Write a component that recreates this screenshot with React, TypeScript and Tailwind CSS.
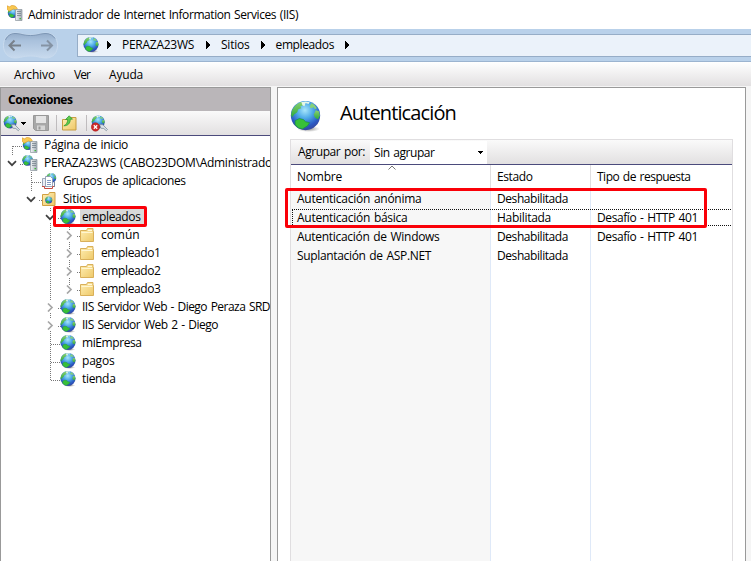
import { useLayoutEffect, useRef, useState, type ReactNode } from 'react';

/* Text whose letter spacing is adjusted so that it fills a given width. */
function Fit({ w, children, className = '' }: { w: number; children: string; className?: string }) {
  const ref = useRef<HTMLSpanElement>(null);
  const [spacing, setSpacing] = useState(0);
  useLayoutEffect(() => {
    const el = ref.current;
    if (!el) return;
    el.style.letterSpacing = '0px';
    const natural = el.getBoundingClientRect().width;
    const next = (w - natural) / children.length;
    el.style.letterSpacing = `${next}px`;
    setSpacing(next);
  }, [w, children]);
  return (
    <span ref={ref} className={`inline-block shrink-0 [word-spacing:1px] whitespace-pre ${className}`} style={{ letterSpacing: spacing }}>
      {children}
    </span>
  );
}

function Defs() {
  return (
    <svg className="absolute size-0" aria-hidden="true">
      <defs>
        <radialGradient id="sea" cx="0.48" cy="0.32" r="0.68">
          <stop offset="0" stopColor="#a8e6fa" />
          <stop offset="0.4" stopColor="#4fabe8" />
          <stop offset="0.78" stopColor="#2a58c4" />
          <stop offset="1" stopColor="#36479c" />
        </radialGradient>
        <linearGradient id="land" x1="0" y1="0" x2="0" y2="1">
          <stop offset="0" stopColor="#8ad070" />
          <stop offset="1" stopColor="#2aa83a" />
        </linearGradient>
        <linearGradient id="folder" x1="0" y1="0" x2="1" y2="1">
          <stop offset="0" stopColor="#ffefb4" />
          <stop offset="1" stopColor="#eec868" />
        </linearGradient>
        <linearGradient id="tower" x1="0" y1="0" x2="1" y2="0">
          <stop offset="0" stopColor="#f2f4f6" />
          <stop offset="1" stopColor="#a2abb3" />
        </linearGradient>
        <linearGradient id="pill" x1="0" y1="0" x2="0" y2="1">
          <stop offset="0" stopColor="#93abc8" />
          <stop offset="0.3" stopColor="#a9c1dc" />
          <stop offset="1" stopColor="#c8daee" />
        </linearGradient>
        <radialGradient id="shade">
          <stop offset="0" stopColor="#555" stopOpacity="0.7" />
          <stop offset="1" stopColor="#777" stopOpacity="0" />
        </radialGradient>
      </defs>
    </svg>
  );
}

function GlobeShape() {
  return (
    <g>
      <circle cx="15" cy="14" r="14.2" fill="url(#sea)" />
      <path d="M2 9C4 5 7 2 11 1l3 1-1 2-3 1 1 2-3 1-1 3-3 2-2 3-1-3z" fill="url(#land)" />
      <path d="M11 1q4-1 8 0l-1 2-3-1-1 3-2-1z" fill="#e6f6e6" />
      <path d="M21 2l3 2 2 3-2 1-1-2-3 1-1-2z" fill="#86d07a" />
      <path d="M25 9l3 1 1 4-2 4-3-2-1-3z" fill="url(#land)" />
      <path d="M5 19l4-2 4 1 2 2 4 1-2 3-5 3-4-1-3-3z" fill="#38c038" stroke="#1a9044" strokeWidth="0.7" />
    </g>
  );
}

function Globe({ className = 'size-4' }: { className?: string }) {
  return (
    <svg viewBox="0 0 30 30" className={`shrink-0 ${className}`}>
      <ellipse cx="18" cy="27" rx="11" ry="3" fill="url(#shade)" />
      <GlobeShape />
    </svg>
  );
}

function Tower() {
  return (
    <g>
      <path d="M8.500 4.500h6.500v11h-6.500z" fill="url(#tower)" stroke="#8b959d" strokeWidth="0.700" />
      <path d="M10 6.500h4M10 8.500h4M10 10.500h4" stroke="#6c7882" strokeWidth="0.700" />
      <path d="M12.500 13h1.500v1.300h-1.500z" fill="#3dbb3d" />
    </g>
  );
}

function Server({ home = false, className = 'size-4' }: { home?: boolean; className?: string }) {
  return (
    <svg viewBox="0 0 16 16" className={`shrink-0 ${className}`}>
      <g transform={home ? 'translate(0.5 2.500) scale(.37)' : 'translate(0 0) scale(.38)'}>
        <GlobeShape />
      </g>
      {home && (
        <path d="M0 .8l2.500 1L5 .3l3.300.8 2 2.200-1.500 1.800-2-1.200L4.500 5 2 6.200 0 4z" fill="#f9c850" stroke="#dc9a30" strokeWidth="0.600" />
      )}
      <Tower />
    </svg>
  );
}

function Folder() {
  return (
    <svg viewBox="0 0 16 16" className="size-4 shrink-0">
      <path d="M1.500 14.500v-11h6l1-2h5.500v3h.5v10z" fill="url(#folder)" stroke="#d9b05a" />
      <path d="M9 3.500h4" stroke="#fff8dc" />
      <path d="M2.500 5.500h11" stroke="#fff6d2" />
    </svg>
  );
}

function SitesFolder() {
  return (
    <svg viewBox="0 0 16 16" className="size-4 shrink-0">
      <path d="M1.500 14.500v-11h6l1-2h5.500v13z" fill="url(#folder)" stroke="#d0a043" />
      <g transform="translate(4 5.500) scale(.25)">
        <GlobeShape />
      </g>
    </svg>
  );
}

function Pools() {
  return (
    <svg viewBox="0 0 16 16" className="size-4 shrink-0">
      <g transform="translate(5 0) scale(.35)">
        <GlobeShape />
      </g>
      <path d="M1.500 5.500h5v8h-5z" fill="#e9eef5" stroke="#8796ad" strokeWidth="0.800" />
      <path d="M4.500 3.500h5l2 2v8h-7z" fill="#fff" stroke="#8291aa" strokeWidth="0.800" />
      <path d="M6 7.500h4M6 9.500h4M6 11.500h4" stroke="#6483b5" strokeWidth="0.800" />
      <path d="M1 13.500h2.500v2h8v-2H14" fill="none" stroke="#c64b40" />
      <path d="M13.500 8v6" stroke="#7688a2" />
    </svg>
  );
}

function ConnectGlobe({ cancel = false }: { cancel?: boolean }) {
  return (
    <svg viewBox="0 0 17 17" className="size-[17px] shrink-0">
      <g transform="translate(.3 .5) scale(.46)">
        <GlobeShape />
      </g>
      <path d="M8.500 9.500l3.500.3 2 2.200 2.500 2.500-1.200 1.200-2.500-2.200-3-.3z" fill="#dbe2e8" stroke="#7f8e9b" strokeWidth="0.800" />
      {cancel && (
        <g>
          <circle cx="4.500" cy="12" r="4.200" fill="#ce2a2a" stroke="#a31c1c" strokeWidth="0.500" />
          <path d="M2.800 10.300l3.400 3.400M6.200 10.300l-3.400 3.400" stroke="#fff" strokeWidth="1.300" />
        </g>
      )}
    </svg>
  );
}

function Disk() {
  return (
    <svg viewBox="0 0 16 16" className="size-4 shrink-0">
      <path d="M.5.5h15v15H2.500l-2-2z" fill="#a8a8a8" stroke="#989898" />
      <path d="M3 1h10v7H3z" fill="#e5e5e5" />
      <path d="M4 10.500h8V15H4z" fill="#d6d6d6" />
      <path d="M5.500 11.500h2v3h-2z" fill="#999" />
    </svg>
  );
}

function UpFolder() {
  return (
    <svg viewBox="0 0 16 16" className="size-4 shrink-0">
      <path d="M1.500 15V4.500h6l1-2H15V15z" fill="url(#folder)" stroke="#c79d43" />
      <path d="M2.800 10.800C5.500 9.500 6.600 7.500 6.700 4.500H4.500L8.200.8 11.500 4.200H9.300c0 4-2.300 6.700-6.500 6.600z" fill="#60cc4c" stroke="#28952f" strokeWidth="0.700" />
    </svg>
  );
}

function Chevron({ open }: { open: boolean }) {
  return (
    <svg viewBox="0 0 10 10" className="ml-px size-2.5 shrink-0">
      {open ? (
        <path d="M1 3.200L5 7.200 9 3.200" fill="none" stroke="#404040" strokeWidth="1.700" />
      ) : (
        <path d="M3 1.500L7 5.500 3 9.500" fill="none" stroke="#a6a6a6" strokeWidth="1.700" />
      )}
    </svg>
  );
}

function Arrow() {
  return (
    <svg viewBox="0 0 4 8" className="h-2 w-1 shrink-0" shapeRendering="crispEdges">
      <path d="M0 0l4 4-4 4z" fill="#000" />
    </svg>
  );
}

function Caret() {
  return (
    <svg viewBox="0 0 5 3" className="h-[3px] w-[5px] shrink-0" shapeRendering="crispEdges">
      <path d="M0 0h5L2.500 3z" fill="#000" />
    </svg>
  );
}

type Node = { pad: string; open?: boolean; icon: ReactNode; label: string; w: number; selected?: boolean };

const nodes: Node[] = [
  { pad: 'pl-[5px]', icon: <Server home />, label: 'Página de inicio', w: 84 },
  { pad: 'pl-[5px]', open: true, icon: <Server />, label: 'PERAZA23WS (CABO23DOM\\Administrado', w: 228 },
  { pad: 'pl-[24px]', icon: <Pools />, label: 'Grupos de aplicaciones', w: 122.5 },
  { pad: 'pl-[24px]', open: true, icon: <SitesFolder />, label: 'Sitios', w: 28.5 },
  { pad: 'pl-[43px]', open: true, icon: <Globe />, label: 'empleados', w: 58.5, selected: true },
  { pad: 'pl-[62px]', open: false, icon: <Folder />, label: 'común', w: 38.5 },
  { pad: 'pl-[62px]', open: false, icon: <Folder />, label: 'empleado1', w: 59.5 },
  { pad: 'pl-[62px]', open: false, icon: <Folder />, label: 'empleado2', w: 59.5 },
  { pad: 'pl-[62px]', open: false, icon: <Folder />, label: 'empleado3', w: 59.5 },
  { pad: 'pl-[43px]', open: false, icon: <Globe />, label: 'IIS Servidor Web - Diego Peraza SRD', w: 188 },
  { pad: 'pl-[43px]', open: false, icon: <Globe />, label: 'IIS Servidor Web 2 - Diego', w: 136 },
  { pad: 'pl-[43px]', icon: <Globe />, label: 'miEmpresa', w: 59.5 },
  { pad: 'pl-[43px]', icon: <Globe />, label: 'pagos', w: 32.5 },
  { pad: 'pl-[43px]', icon: <Globe />, label: 'tienda', w: 33.5 },
];

/* Dotted connectors drawn behind the tree rows. */
function Connectors() {
  return (
    <svg viewBox="0 0 269 260" className="absolute top-0 left-0 h-[260px] w-[269px]">
      <path
        d="M12 10.500h10M19 28.500h3M31 46.500h11M38 64.500h4M57 82.500h3M76 100.500h4M76 118.500h4M76 136.500h4M76 154.500h4M57 172.500h3M57 190.500h3M50 208.500h10M50 226.500h10M50 244.500h10M11.500 10v10M30.500 36v20M49.500 72v4M49.500 87v78M49.500 177v6M49.500 195v49M68.500 91v4M68.500 106v7M68.500 124v7M68.500 142v7"
        fill="none"
        stroke="#777"
        strokeDasharray="1 1"
      />
    </svg>
  );
}

function TreeRow({ node }: { node: Node }) {
  return (
    <div className={`flex h-[18px] items-center ${node.pad}`}>
      <span className="flex w-[17px] shrink-0">{node.open !== undefined && <Chevron open={node.open} />}</span>
      <span className="-ml-px flex shrink-0">{node.icon}</span>
      <span className={`ml-1 flex h-[17px] items-center pl-0.5 ${node.selected ? 'bg-[#d9d9d9] pr-1' : ''}`}>
        <Fit w={node.w}>{node.label}</Fit>
      </span>
    </div>
  );
}

const rows = [
  { name: 'Autenticación anónima', nw: 124.5, state: 'Deshabilitada', sw: 71, type: '' },
  { name: 'Autenticación básica', nw: 110.5, state: 'Habilitada', sw: 54, type: 'Desafío - HTTP 401' },
  { name: 'Autenticación de Windows', nw: 142.5, state: 'Deshabilitada', sw: 71, type: 'Desafío - HTTP 401' },
  { name: 'Suplantación de ASP.NET', nw: 134, state: 'Deshabilitada', sw: 71, type: '' },
];

function Connections() {
  return (
    <section className="flex w-[271px] shrink-0 flex-col overflow-hidden border border-b-0 border-[#999] bg-white">
      <div className="flex h-[23px] shrink-0 items-center bg-[#bab6b9] pl-[7px] font-bold">
        <Fit w={64.5}>Conexiones</Fit>
      </div>
      <div className="flex h-[25px] shrink-0 items-center border-b border-[#4b4b7c] bg-linear-to-b from-[#fafafa] to-[#e2e0e1] pl-0.5">
        <ConnectGlobe />
        <span className="mr-[7px] ml-[1px] flex"><Caret /></span>
        <Disk />
        <span className="mx-[7px] h-4 w-px bg-[#bfbcbe]" />
        <span className="-ml-[3px] flex"><UpFolder /></span>
        <span className="mr-1 ml-[9px] h-4 w-px bg-[#bfbcbe]" />
        <ConnectGlobe cancel />
      </div>
      <div className="relative">
        <Connectors />
        <div className="relative flex flex-col">
          {nodes.map((n) => (
            <TreeRow key={n.label} node={n} />
          ))}
        </div>
        <div className="absolute top-[70px] left-[52px] h-[21px] w-[94px] rounded-[2px] border-3 border-[#fa0008]" />
      </div>
    </section>
  );
}

function Authentication() {
  return (
    <section className="flex w-[469px] shrink-0 flex-col border border-b-0 border-[#999] bg-white pr-3 pl-3">
      <header className="flex h-[51px] shrink-0 items-center">
        <span className="mt-[5px] flex"><Globe className="size-[31px]" /></span>
        <span className="mb-0.5 ml-[19px] flex text-[20px] leading-6">
          <Fit w={116}>Autenticación</Fit>
        </span>
      </header>
      <div className="relative flex grow flex-col border border-b-0 border-[#e0dee0]">
        <div className="flex h-[25px] shrink-0 items-center border-b border-[#4b4b7c] bg-linear-to-b from-[#fafafa] to-[#e2e0e1] pl-[7px]">
          <Fit w={67}>Agrupar por:</Fit>
          <div className="ml-[5px] flex h-[23px] w-[117px] items-center justify-between bg-white pt-px pr-1 pl-1">
            <Fit w={60.5}>Sin agrupar</Fit>
            <Caret />
          </div>
        </div>
        <svg viewBox="0 0 8 5" className="absolute top-[25px] left-[97px] h-[5px] w-2">
          <path d="M.5 4.500L4 1l3.500 3.500" fill="none" stroke="#777" />
        </svg>
        <div className="flex h-[23px] shrink-0 items-center">
          <div className="flex h-full w-[200px] items-center border-r border-[#e0dee0] pt-px pl-1.5"><Fit w={45}>Nombre</Fit></div>
          <div className="flex h-full w-[100px] items-center border-r border-[#e0dee0] pt-px pl-1.5"><Fit w={35.5}>Estado</Fit></div>
          <div className="flex items-center pt-px pl-1.5"><Fit w={93.5}>Tipo de respuesta</Fit></div>
        </div>
        <div className="relative flex grow">
          <div className="w-[200px] border-r border-[#dfe9f8] bg-[#f7f7f7] pt-px">
            {rows.map((r) => (
              <div key={r.name} className="flex h-[19px] items-center pl-1.5"><Fit w={r.nw}>{r.name}</Fit></div>
            ))}
          </div>
          <div className="w-[100px] border-r border-[#dfe9f8] pt-px">
            {rows.map((r) => (
              <div key={r.name} className="flex h-[19px] items-center pl-1.5"><Fit w={r.sw}>{r.state}</Fit></div>
            ))}
          </div>
          <div className="pt-px">
            {rows.map((r) => (
              <div key={r.name} className="flex h-[19px] items-center pl-1.5">{r.type && <Fit w={101}>{r.type}</Fit>}</div>
            ))}
          </div>
          <svg viewBox="0 0 441 18" className="absolute top-[21px] left-0 h-[18px] w-[441px]">
            <path d="M1 .5h440M1 16.500h440M1.500 1v16" fill="none" stroke="#111" strokeDasharray="1 1" />
          </svg>
          <div className="absolute top-0 -left-[6px] h-[40px] w-[422px] rounded-[2px] border-3 border-[#fa0008]" />
        </div>
      </div>
    </section>
  );
}

export default function App() {
  return (
    <div className="flex h-[561px] w-[751px] flex-col overflow-hidden bg-[#f5f5f5] font-['Open_Sans','Noto_Sans',sans-serif] text-[12px] leading-4 text-black">
      <Defs />
      <div className="flex h-[29px] shrink-0 items-center bg-white pl-[7px]">
        <span className="-mt-1 flex"><Server home /></span>
        <span className="ml-[5px] flex"><Fit w={270}>Administrador de Internet Information Services (IIS)</Fit></span>
      </div>
      <div className="flex h-[33px] shrink-0 items-center border-b border-[#9cb4d0] bg-[#b9d1ea] pl-[3px]">
        <svg viewBox="0 0 55 27" className="h-[27px] w-[55px] shrink-0">
          <path d="M12 1C18 1 20 3 27.500 3S37 1 43 1C50 1 54.500 6 54.500 13.500S50 26 43 26C37 26 35 24 27.500 24S18 26 12 26C5 26 .5 21 .5 13.500S5 1 12 1z" fill="url(#pill)" stroke="#c9dbee" />
          <path d="M2.500 8C5 2.500 9 1.500 12 1.500c6 0 8 2 15.500 2s9.500-2 15.500-2c4 0 7 2 9 5" fill="none" stroke="#7d97b6" />
          <path d="M18 13.500H7M11.500 8.500l-5 5 5 5" fill="none" stroke="#78818b" strokeWidth="2" />
          <path d="M38 13.500h10.500M44 8.500l5 5-5 5" fill="none" stroke="#8593a4" strokeWidth="2" />
        </svg>
        <div className="ml-[19px] flex h-[23px] w-[680px] shrink-0 items-center border border-[#96adc7] bg-[#ebf2fa] pl-[5px]">
          <Globe />
          <span className="mr-[11px] ml-[8px] flex"><Arrow /></span>
          <Fit w={72}>PERAZA23WS</Fit>
          <span className="mr-[11px] ml-3 flex"><Arrow /></span>
          <Fit w={28.5}>Sitios</Fit>
          <span className="mr-[11px] ml-[11px] flex"><Arrow /></span>
          <Fit w={58.5}>empleados</Fit>
          <span className="ml-[11px] flex"><Arrow /></span>
        </div>
      </div>
      <div className="flex h-[24px] shrink-0 items-center bg-linear-to-b from-white to-[#e2e0e1] pt-px pl-3.5">
        <span className="flex w-[60px]"><Fit w={41}>Archivo</Fit></span>
        <span className="flex w-[35px]"><Fit w={16}>Ver</Fit></span>
        <Fit w={34}>Ayuda</Fit>
      </div>
      <main className="mt-px flex grow gap-1.5">
        <Connections />
        <Authentication />
      </main>
    </div>
  );
}
